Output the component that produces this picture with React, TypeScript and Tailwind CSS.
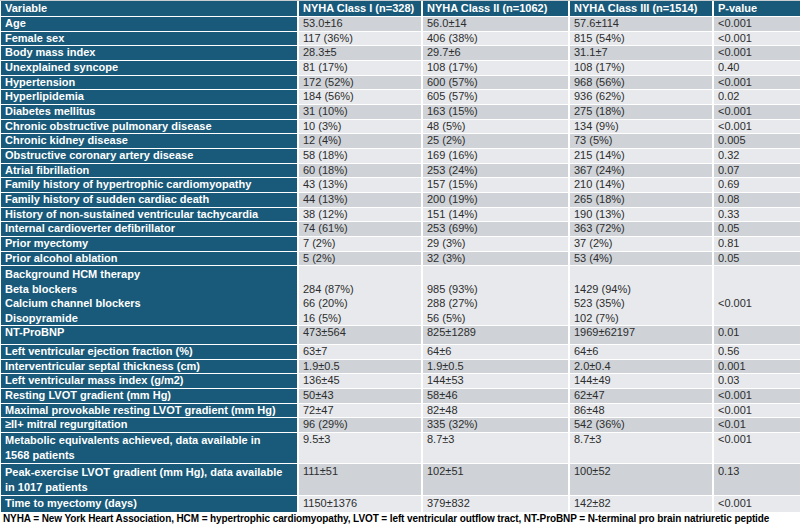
import React from "react";

type Row = {
  label: string[];
  vals: string[];
  h?: string;
};

const rows: Row[] = [
  { label: ["Age"], vals: ["53.0±16", "56.0±14", "57.6±114", "<0.001"] },
  { label: ["Female sex"], vals: ["117 (36%)", "406 (38%)", "815 (54%)", "<0.001"] },
  { label: ["Body mass index"], vals: ["28.3±5", "29.7±6", "31.1±7", "<0.001"] },
  { label: ["Unexplained syncope"], vals: ["81 (17%)", "108 (17%)", "108 (17%)", "0.40"] },
  { label: ["Hypertension"], vals: ["172 (52%)", "600 (57%)", "968 (56%)", "<0.001"] },
  { label: ["Hyperlipidemia"], vals: ["184 (56%)", "605 (57%)", "936 (62%)", "0.02"] },
  { label: ["Diabetes mellitus"], vals: ["31 (10%)", "163 (15%)", "275 (18%)", "<0.001"] },
  { label: ["Chronic obstructive pulmonary disease"], vals: ["10 (3%)", "48 (5%)", "134 (9%)", "<0.001"] },
  { label: ["Chronic kidney disease"], vals: ["12 (4%)", "25 (2%)", "73 (5%)", "0.005"] },
  { label: ["Obstructive coronary artery disease"], vals: ["58 (18%)", "169 (16%)", "215 (14%)", "0.32"] },
  { label: ["Atrial fibrillation"], vals: ["60 (18%)", "253 (24%)", "367 (24%)", "0.07"] },
  { label: ["Family history of hypertrophic cardiomyopathy"], vals: ["43 (13%)", "157 (15%)", "210 (14%)", "0.69"] },
  { label: ["Family history of sudden cardiac death"], vals: ["44 (13%)", "200 (19%)", "265 (18%)", "0.08"] },
  { label: ["History of non-sustained ventricular tachycardia"], vals: ["38 (12%)", "151 (14%)", "190 (13%)", "0.33"] },
  { label: ["Internal cardioverter defibrillator"], vals: ["74 (61%)", "253 (69%)", "363 (72%)", "0.05"] },
  { label: ["Prior myectomy"], vals: ["7 (2%)", "29 (3%)", "37 (2%)", "0.81"] },
  { label: ["Prior alcohol ablation"], vals: ["5 (2%)", "32 (3%)", "53 (4%)", "0.05"] },
];

const rows2: Row[] = [
  { label: ["NT-ProBNP"], vals: ["473±564", "825±1289", "1969±62197", "0.01"], h: "h-[18px]" },
  { label: ["Left ventricular ejection fraction (%)"], vals: ["63±7", "64±6", "64±6", "0.56"] },
  { label: ["Interventricular septal thickness (cm)"], vals: ["1.9±0.5", "1.9±0.5", "2.0±0.4", "0.001"] },
  { label: ["Left ventricular mass index (g/m2)"], vals: ["136±45", "144±53", "144±49", "0.03"] },
  { label: ["Resting LVOT gradient (mm Hg)"], vals: ["50±43", "58±46", "62±47", "<0.001"] },
  { label: ["Maximal provokable resting LVOT gradient (mm Hg)"], vals: ["72±47", "82±48", "86±48", "<0.001"] },
  { label: ["≥II+ mitral regurgitation"], vals: ["96 (29%)", "335 (32%)", "542 (36%)", "<0.01"] },
  {
    label: ["Metabolic equivalents achieved, data available in", "1568 patients"],
    vals: ["9.5±3", "8.7±3", "8.7±3", "<0.001"],
    h: "h-[30px] leading-[14.5px]",
  },
  {
    label: ["Peak-exercise LVOT gradient (mm Hg), data available", "in 1017 patients"],
    vals: ["111±51", "102±51", "100±52", "0.13"],
    h: "h-[31px] leading-[15px] pt-[1px]",
  },
  {
    label: ["Time to myectomy (days)"],
    vals: ["1150±1376", "379±832", "142±82", "<0.001"],
    h: "h-[16px] pt-[1px]",
  },
];

const teal = "bg-[#195a7a]";
const dark = "bg-[#cfd3d8]";
const light = "bg-[#e7e9ec]";

function DataRow({ row, shade }: { row: Row; shade: string }) {
  const pad = row.h && row.h.includes("pt-[1px]") ? "pt-[1px]" : "";
  return (
    <tr>
      <td className={`${teal} ${row.h ?? "h-[13.65px]"} align-top px-[4px] font-bold text-white`}>
        {row.label.map((l) => (
          <div key={l}>{l}</div>
        ))}
      </td>
      {row.vals.map((v, i) => (
        <td key={i} className={`${shade} ${pad} align-top px-[4px] text-[#2d2d2d]`}>
          {v}
        </td>
      ))}
    </tr>
  );
}

export default function App() {
  return (
    <div
      className="w-[800px] h-[527px] overflow-hidden bg-white"
      style={{ fontFamily: '"Liberation Sans", Arial, sans-serif' }}
    >
      <div className="h-[1px] bg-[#c9ced3]" />
      <table className="table-fixed w-[805px] ml-[-1px] border-separate border-spacing-x-[2px] border-spacing-y-[1px] text-[11px] leading-[13.65px] mt-[-1px]">
        <colgroup>
          <col className="w-[296px]" />
          <col className="w-[122px]" />
          <col className="w-[145px]" />
          <col className="w-[142px]" />
          <col className="w-[88px]" />
        </colgroup>
        <thead>
          <tr>
            {["Variable", "NYHA Class I (n=328)", "NYHA Class II (n=1062)", "NYHA Class III (n=1514)", "P-value"].map(
              (h) => (
                <th key={h} className={`${teal} h-[15px] px-[4px] text-left font-bold text-white`}>
                  {h}
                </th>
              )
            )}
          </tr>
        </thead>
        <tbody>
          {rows.map((r, i) => (
            <DataRow key={r.label[0]} row={r} shade={i % 2 === 0 ? dark : light} />
          ))}
          <tr>
            <td className={`${teal} align-top px-[4px] pt-[1px] font-bold text-white leading-[14.5px]`}>
              <div>Background HCM therapy</div>
              <div>Beta blockers</div>
              <div>Calcium channel blockers</div>
              <div>Disopyramide</div>
            </td>
            <td className={`${light} align-top px-[4px] pt-[1px] text-[#2d2d2d] leading-[14.5px]`}>
              <div>&nbsp;</div>
              <div>284 (87%)</div>
              <div>66 (20%)</div>
              <div>16 (5%)</div>
            </td>
            <td className={`${light} align-top px-[4px] pt-[1px] text-[#2d2d2d] leading-[14.5px]`}>
              <div>&nbsp;</div>
              <div>985 (93%)</div>
              <div>288 (27%)</div>
              <div>56 (5%)</div>
            </td>
            <td className={`${light} align-top px-[4px] pt-[1px] text-[#2d2d2d] leading-[14.5px]`}>
              <div>&nbsp;</div>
              <div>1429 (94%)</div>
              <div>523 (35%)</div>
              <div>102 (7%)</div>
            </td>
            <td className={`${light} align-top px-[4px] pt-[1px] text-[#2d2d2d] leading-[14.5px]`}>
              <div>&nbsp;</div>
              <div>&nbsp;</div>
              <div>&lt;0.001</div>
            </td>
          </tr>
          {rows2.map((r, i) => (
            <DataRow key={r.label[0]} row={r} shade={i % 2 === 0 ? dark : light} />
          ))}
        </tbody>
      </table>
      <p className="px-[3px] whitespace-nowrap text-[10px] leading-[12px] font-bold text-black tracking-[-0.1px]">
        NYHA = New York Heart Association, HCM = hypertrophic cardiomyopathy, LVOT = left ventricular outflow tract,
        NT-ProBNP = N-terminal pro brain natriuretic peptide
      </p>
    </div>
  );
}
